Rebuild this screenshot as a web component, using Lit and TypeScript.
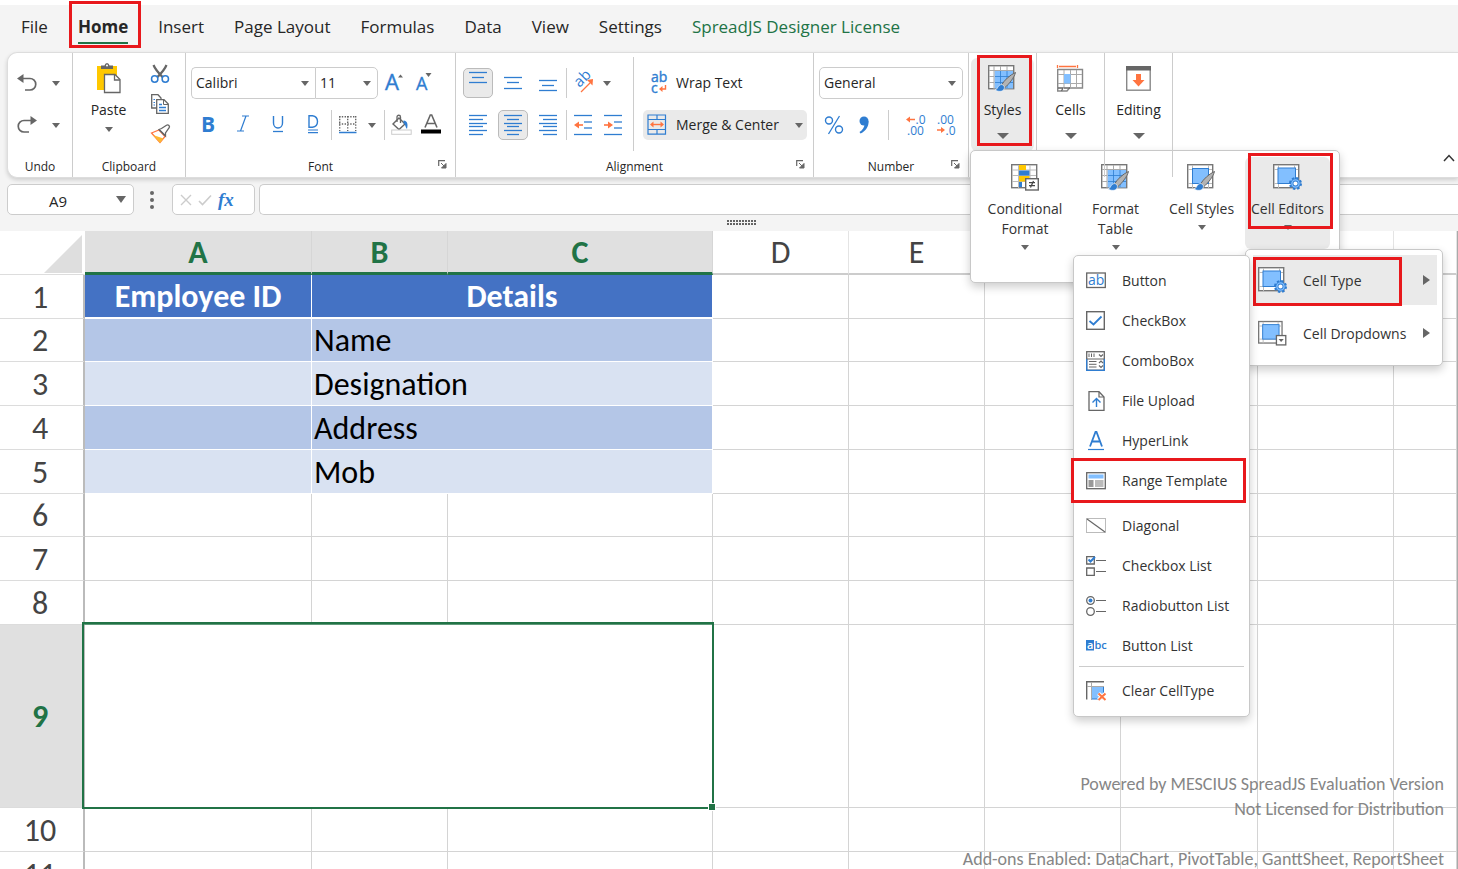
import { LitElement, html, svg, css, nothing, TemplateResult } from "lit";
import { customElement, property } from "lit/decorators.js";
import { classMap } from "lit/directives/class-map.js";
import { styleMap } from "lit/directives/style-map.js";

const BLUE = "#2f7dd1";
const SKY = "#82bfff";
const GRAY = "#666";
const ORANGE = "#ff7440";
const YELLOW = "#ffc800";

const icon = (w: number, h: number, body: unknown) => html`
  <svg width=${w} height=${h} viewBox="0 0 ${w} ${h}" fill="none" aria-hidden="true">${body}</svg>`;

const caret = icon(8, 5, svg`<path d="M0 0H8L4 5Z" fill=${GRAY} />`);
const bigCaret = icon(12, 6, svg`<path d="M0 0H12L6 6Z" fill=${GRAY} />`);
const sideCaret = icon(7, 10, svg`<path d="M0 0L7 5L0 10Z" fill=${GRAY} />`);

/* Horizontal rules: each entry is [x1, x2, y]. */
const bars = (rows: number[][]) =>
  rows.map(([a, b, y]) => svg`<path d="M${a} ${y}H${b}" stroke=${BLUE} stroke-width="1.3" />`);

const gridFrame = svg`
  <rect x="0.7" y="0.7" width="25" height="23" fill="#fff" stroke="#777" stroke-width="1.4" />
  <path d="M5.5 1V24M21.5 1V24M1 5.5H25M1 19.5H25" stroke="#bbb" />`;

const brush = svg`
  <path d="M27.5 7.5C22 10 16.500 15 13.500 20L16.500 23C21 19 26 13 27.500 7.500Z" fill="#b3b3b3" stroke="#666" stroke-width="1" />
  <path d="M7 25C10 24.500 9.500 20 13 19.500C16 19.500 17.500 22.500 15.500 25C13.500 27 9.500 26.500 7 25Z" fill=${BLUE} stroke="#fff" stroke-width=".6" />`;

const gear = svg`
  <g transform="translate(22.500 19.500)">
    <circle r="5" stroke=${BLUE} stroke-width="3" stroke-dasharray="2.200 1.727" />
    <circle r="3.600" fill="#fff" stroke=${BLUE} stroke-width="3" />
    <circle r="3.600" stroke=${SKY} stroke-width="1.400" />
  </g>`;

const I = {
  undo: icon(20, 18, svg`<path d="M0 4.500L6.500 0V9Z" fill=${GRAY} /><path d="M5 4.500H13A5.700 5.700 0 0 1 13 16H8" stroke=${GRAY} stroke-width="1.700" />`),
  redo: icon(20, 18, svg`<path d="M20 4.500L13.500 0V9Z" fill=${GRAY} /><path d="M15 4.500H7A5.700 5.700 0 0 0 7 16H12" stroke=${GRAY} stroke-width="1.700" />`),
  paste: icon(25, 30, svg`
    <path d="M1 3H21V27H1Z" fill=${YELLOW} />
    <path d="M5 6V2.500H8.500Q9 0 11 0T13.500 2.500H17V6Z" fill=${GRAY} /><circle cx="11" cy="2.500" r="1" fill="#fff" />
    <path d="M8.500 11.500H19L24 16.500V29.500H8.500Z" fill="#fff" stroke=${GRAY} stroke-width="1.300" />
    <path d="M18.500 11.500V17H24" stroke=${GRAY} stroke-width="1.300" />`),
  cut: icon(20, 20, svg`
    <path d="M3.500 1C5 5 9 9.500 13 13.500M16.500 1C15 5 11 9.500 7 13.500" stroke=${GRAY} stroke-width="2.200" />
    <circle cx="4.700" cy="15" r="3.200" stroke=${BLUE} stroke-width="1.500" /><circle cx="15.300" cy="15" r="3.200" stroke=${BLUE} stroke-width="1.500" />`),
  copy: icon(20, 20, svg`
    <path d="M1.700.7H8L11 4V14H1.700Z" fill="#fff" stroke=${GRAY} stroke-width="1.300" />
    <path d="M3.500 5.500H5M3.500 8.500H5M3.500 11H5" stroke=${BLUE} />
    <path d="M6.700 5.700H14L18.300 10V19.300H6.700Z" fill="#fff" stroke=${GRAY} stroke-width="1.300" />
    <path d="M13.500 6V10.500H18" stroke=${GRAY} /><path d="M9 10.500H12M9 13.500H16M9 16.500H16" stroke=${BLUE} stroke-width="1.300" />`),
  painter: icon(21, 20, svg`
    <path d="M1.500 9L9 6L15 12.500L10 18.500Z" fill="#fff" stroke=${ORANGE} stroke-width="1.300" />
    <path d="M3 11L13.500 14.500L10 19Z" fill="#fdb833" />
    <path d="M9 5.500L11.500 4.500L16.500 1.200A1.900 1.900 0 0 1 19 4L15.500 9V12Z" fill="#fff" stroke=${GRAY} stroke-width="1.300" />
    <path d="M9 5.500L15.500 12" stroke=${GRAY} stroke-width="1.300" />`),
  grow: icon(20, 20, svg`<text class="glyph" x="0" y="17" font-size="22" fill=${BLUE} stroke=${BLUE} stroke-width=".4">A</text><path d="M13 4.500L15.500 1.500L18 4.500Z" fill=${GRAY} />`),
  shrink: icon(20, 20, svg`<text class="glyph" x="1" y="17" font-size="18" fill=${BLUE} stroke=${BLUE} stroke-width=".3">A</text><path d="M10.500 0H16.500L13.500 4Z" fill=${GRAY} />`),
  bold: icon(20, 20, svg`<text class="glyph" x="3" y="17" font-size="21" font-weight="700" fill=${BLUE}>B</text>`),
  italic: icon(20, 20, svg`<path d="M9 1H16M4 16H11M13 1L7.500 16" stroke=${BLUE} stroke-width="1.200" />`),
  underline: icon(20, 20, svg`<path d="M5.500 1V8A4.500 5 0 0 0 14.500 8V1" stroke=${BLUE} stroke-width="1.400" /><path d="M5 16.500H15" stroke=${BLUE} stroke-width="1.300" />`),
  dbl: icon(20, 20, svg`<path d="M6 .7H9.500Q14.500 1.500 14.500 6.500T9.500 12.300H6Z" stroke=${BLUE} stroke-width="1.400" /><path d="M5 15H15M5 17.700H15" stroke=${BLUE} stroke-width="1.200" />`),
  borders: icon(18, 18, svg`
    <path d="M.7 0V15M8.700 0V15M16.700 0V15" stroke=${GRAY} stroke-width="1.400" stroke-dasharray="1.400 1.400" />
    <path d="M0 .7H17M0 8H17" stroke=${GRAY} stroke-width="1.400" stroke-dasharray="1.400 1.400" /><path d="M0 16.500H17.500" stroke=${BLUE} stroke-width="1.500" />`),
  fill: icon(21, 20, svg`
    <path d="M8 3L14 9L8 14.500L2 9Z" stroke=${GRAY} stroke-width="1.400" /><path d="M6 7V2A1.700 1.700 0 0 1 9.500 2V8" stroke=${GRAY} stroke-width="1.300" />
    <path d="M12.500 5.500C17 6 17 10 16 14C14 12 15 10 12.500 8Z" fill=${BLUE} /><rect x=".7" y="15" width="19.500" height="4.300" fill="#fff" stroke="#ccc" />`),
  color: icon(20, 20, svg`<path d="M4 12.500L9.300 0H10.700L16 12.500M6 8.500H14" stroke=${GRAY} stroke-width="1.600" /><rect x="0" y="14.500" width="20" height="4" fill="#000" />`),
  top: icon(20, 20, bars([[1, 19, -0.5], [4, 16, 4.5], [1, 19, 9.5]])),
  middle: icon(20, 20, bars([[1, 19, 4.5], [4, 16, 9.5], [1, 19, 15.5]])),
  bottom: icon(20, 20, bars([[1, 19, 7.5], [4, 16, 12.5], [1, 19, 17.5]])),
  left: icon(20, 20, bars([[1, 19, 0.5], [1, 15, 4.500], [1, 19, 8.500], [1, 15, 11.500], [1, 19, 15.500], [1, 15, 19.500]])),
  center: icon(20, 20, bars([[1, 19, 0.5], [4, 16, 4.500], [1, 19, 8.500], [4, 16, 11.500], [1, 19, 15.500], [4, 16, 19.500]])),
  right: icon(20, 20, bars([[1, 19, 0.5], [5, 19, 4.500], [1, 19, 8.500], [5, 19, 11.500], [1, 19, 15.500], [5, 19, 19.500]])),
  outdent: icon(20, 20, svg`${bars([[1, 19, 0.5], [11, 19, 7], [11, 19, 13], [1, 19, 19.5]])}<path d="M3 10H10" stroke=${ORANGE} stroke-width="1.600" /><path d="M1 10L6 6.500V13.500Z" fill=${ORANGE} />`),
  indent: icon(20, 20, svg`${bars([[1, 19, 0.5], [11, 19, 7], [11, 19, 13], [1, 19, 19.5]])}<path d="M1 10H7" stroke=${ORANGE} stroke-width="1.600" /><path d="M10 10L5 6.500V13.500Z" fill=${ORANGE} />`),
  orient: icon(20, 20, svg`
    <text class="glyph" transform="translate(6.500 15) rotate(-45)" font-size="15" fill=${BLUE}>ab</text>
    <path d="M8 19L17 10" stroke=${ORANGE} stroke-width="1.300" /><path d="M14 7L20 6L19.500 12.500Z" fill=${ORANGE} />`),
  wrap: icon(20, 22, svg`
    <text class="glyph" x="4" y="10" font-size="14" fill=${BLUE} stroke=${BLUE} stroke-width=".4">ab</text><text class="glyph" x="4" y="20.500" font-size="14" fill=${BLUE} stroke=${BLUE} stroke-width=".4">c</text>
    <path d="M18.500 13V17H14" stroke=${ORANGE} stroke-width="1.400" /><path d="M12 17L15.500 14V20Z" fill=${ORANGE} />`),
  merge: icon(20, 20, svg`
    <path d="M1 0H18.500V19.200H1ZM1 4.500H18.500M1 14.500H18.500M10 0V4.500M10 14.500V19" stroke=${BLUE} stroke-width="1.200" />
    <path d="M5 9.500H15" stroke=${ORANGE} stroke-width="1.400" /><path d="M3 9.500L6.500 6.500V12.500ZM17 9.500L13.500 6.500V12.500Z" fill=${ORANGE} />`),
  percent: icon(20, 20, svg`
    <circle cx="5" cy="5.500" r="3.500" stroke=${BLUE} stroke-width="1.400" /><circle cx="15" cy="14.500" r="3.500" stroke=${BLUE} stroke-width="1.400" />
    <path d="M15.500 1L4.500 19" stroke=${BLUE} stroke-width="1.300" />`),
  comma: icon(20, 20, svg`<circle cx="10" cy="6" r="4.500" fill=${BLUE} /><path d="M14.500 6C15 12 11 16.500 6.500 18.500L5.500 17C8.500 15 10.500 12.500 10.500 9Z" fill=${BLUE} />`),
  lessDec: icon(20, 22, svg`
    <text class="glyph" x="9.500" y="10" font-size="12" fill=${BLUE}>.0</text><text class="glyph" x="1" y="20.500" font-size="12" fill=${BLUE}>.00</text>
    <path d="M3 5.500H9" stroke=${ORANGE} stroke-width="1.500" /><path d="M0 5.500L4 2.500V8.500Z" fill=${ORANGE} />`),
  moreDec: icon(20, 22, svg`
    <text class="glyph" x="1" y="10" font-size="12" fill=${BLUE}>.00</text><text class="glyph" x="9.500" y="20.500" font-size="12" fill=${BLUE}>.0</text>
    <path d="M1 16H6" stroke=${ORANGE} stroke-width="1.500" /><path d="M9 16L5 13V19Z" fill=${ORANGE} />`),
  launcher: icon(9, 9, svg`<path d="M.7 6V.7H7" stroke=${GRAY} stroke-width="1.200" /><path d="M3 3L7 7M8 3.500V8H3.500Z" fill=${GRAY} stroke=${GRAY} />`),
  styles: icon(29, 27, svg`
    <rect x=".7" y=".7" width="25" height="23" fill="#fff" stroke="#777" stroke-width="1.400" /><rect x="6.500" y="5.500" width="18.500" height="18" fill=${SKY} />
    <path d="M6 1V24M1 5.500H25" stroke="#aaa" /><path d="M1 11.500H6M1 17.500H6M12.500 1V5.500M19 1V5.500" stroke="#aaa" />
    <path d="M12.500 6V23M19 6V23M7 11.500H25M7 17.500H25" stroke=${BLUE} stroke-width=".8" />${brush}`),
  cellStyles: icon(29, 27, svg`${gridFrame}<rect x="5.500" y="4.500" width="16" height="15" fill=${SKY} stroke=${BLUE} />${brush}`),
  cellEditors: icon(29, 27, svg`${gridFrame}<rect x="5" y="4" width="17.500" height="15.500" fill=${SKY} stroke=${BLUE} />${gear}`),
  cellDrop: icon(31, 27, svg`${gridFrame}<rect x="5" y="4" width="17.500" height="15.500" fill=${SKY} stroke=${BLUE} />
    <rect x="19.700" y="15.700" width="10" height="10" fill="#fff" stroke=${GRAY} stroke-width="1.400" /><path d="M22 19.500H27.500L24.700 22.500Z" fill=${GRAY} />`),
  cells: icon(29, 27, svg`
    <path d="M1.500 0V3M21.500 0V3M3 1.500H20" stroke=${ORANGE} stroke-width="1.300" />
    <path d="M1.700 4.500H26.500V23H13.500L11 26H1.700Z" fill="#fff" stroke="#888" stroke-width="1.400" />
    <path d="M8 5V22M14.500 5V22M20.500 5V22M2 9.500H26M2 18.500H26" stroke="#aaa" /><rect x="8" y="9" width="6.500" height="9.500" fill=${SKY} />
    <path d="M2 23H7L5.500 26M8 23H14" stroke=${GRAY} stroke-width="1.300" />`),
  editing: icon(25, 25, svg`
    <rect x=".7" y=".7" width="23.500" height="23.500" fill="#fff" stroke="#888" stroke-width="1.400" /><rect width="25" height="4.500" fill=${GRAY} />
    <path d="M10 8H15V14H18.500L12.500 20.500L6.500 14H10Z" fill=${ORANGE} />`),
  conditional: icon(29, 27, svg`
    <rect x=".7" y=".7" width="25" height="23" fill="#fff" stroke="#777" stroke-width="1.400" />
    <path d="M7.500 1V24M19 1V24M1 6H25M1 11.500H25M1 17.500H25" stroke="#bbb" />
    <rect x="8" y="1" width="7" height="5" fill=${YELLOW} /><rect x="8" y="6.500" width="10.500" height="5" fill=${BLUE} />
    <rect x="8" y="12" width="10.500" height="5.500" fill=${YELLOW} /><rect x="8" y="18" width="3" height="5" fill=${BLUE} />
    <rect x="14.700" y="14.700" width="12.600" height="11.300" fill="#fff" stroke=${GRAY} stroke-width="1.400" />
    <path d="M18 18.700H24M18 21.700H24M22.500 17L19.500 23.500" stroke="#444" stroke-width="1.200" />`),
  button: icon(20, 20, svg`<rect x=".7" y="2" width="18.600" height="14.500" fill="#fff" stroke=${GRAY} stroke-width="1.300" /><text class="glyph" x="2" y="14" font-size="14" fill=${BLUE}>ab</text>`),
  checkbox: icon(20, 20, svg`<rect x=".7" y=".7" width="17.600" height="17.600" fill="#fff" stroke=${GRAY} stroke-width="1.400" /><path d="M3.500 10L7.500 13.500L15.500 5.500" stroke=${BLUE} stroke-width="1.800" />`),
  combo: icon(20, 20, svg`
    <rect x=".7" y=".7" width="17.600" height="18.500" fill="#fff" stroke=${GRAY} stroke-width="1.300" /><path d="M.7 8V19.300H18.300V8" stroke=${BLUE} stroke-width="1.300" />
    <path d="M3 2.500V6M5.500 2.500V6M8 2.500V6M3 10.500H10.500M3 13.300H10.500M3 16H10.500M1 8H18" stroke=${GRAY} />
    <path d="M13 3.500L15 5.500L17 3.500M13 12L15 10L17 12M13 14.500L15 16.500L17 14.500" stroke=${GRAY} stroke-width="1.200" />`),
  upload: icon(20, 20, svg`
    <path d="M3 .7H13L18 6V19.300H3Z" fill="#fff" stroke=${GRAY} stroke-width="1.300" /><path d="M13 1V6H18" stroke=${GRAY} stroke-width="1.200" />
    <path d="M10.500 16V8M6.500 11.500L10.500 7.500L14.500 11.500" stroke=${BLUE} stroke-width="1.400" />`),
  link: icon(20, 20, svg`<path d="M4 15.500L9.500 1H10.500L16 15.500M6 10.500H14" stroke=${BLUE} stroke-width="1.800" /><path d="M2 18.500H18" stroke=${BLUE} stroke-width="1.200" />`),
  template: icon(20, 20, svg`
    <rect x=".7" y="1.700" width="18.600" height="16" fill="#fff" stroke=${GRAY} stroke-width="1.300" /><rect x="2.500" y="3.500" width="15" height="4" fill=${SKY} />
    <rect x="2.500" y="9" width="5" height="7" fill="#999" /><rect x="9" y="9" width="8.500" height="7" fill="#bbb" />`),
  diagonal: icon(20, 20, svg`<rect x=".5" y="2.500" width="19" height="14" fill="#fff" stroke="#bbb" /><path d="M1 3L19 16" stroke=${GRAY} stroke-width="1.200" />`),
  checkList: icon(20, 20, svg`
    <path d="M.7.700H8.300V8H.7ZM.7 12H8.300V19.300H.7Z" stroke=${GRAY} stroke-width="1.300" /><path d="M10 4.500H20M10 15.500H20" stroke=${GRAY} stroke-width="1.200" />
    <path d="M2.500 3.500L4.500 5.500L9 1" stroke=${BLUE} stroke-width="2" />`),
  radioList: icon(20, 20, svg`
    <circle cx="4.500" cy="4.500" r="3.800" stroke=${GRAY} stroke-width="1.300" /><circle cx="4.500" cy="4.500" r="2" fill=${BLUE} />
    <circle cx="4.500" cy="15.500" r="3.800" stroke=${GRAY} stroke-width="1.300" /><path d="M10 4.500H20M10 15.500H20" stroke=${GRAY} stroke-width="1.200" />`),
  buttonList: icon(20, 20, svg`
    <rect x="0" y="4" width="8" height="10.500" fill=${BLUE} /><text class="glyph" x="1" y="12.500" font-size="11" font-weight="600" fill="#fff">a</text>
    <text class="glyph" x="8.500" y="12.500" font-size="11" font-weight="600" fill=${BLUE}>bc</text>`),
  clear: icon(20, 20, svg`
    <rect x="5.500" y="5.500" width="12" height="12.500" fill=${SKY} stroke=${BLUE} /><path d="M.7 18.500V.7H18" stroke=${GRAY} stroke-width="1.400" />
    <path d="M5.500 1V19M1 5.500H18" stroke="#aaa" /><path d="M12.500 12.500L19.500 19M19.500 12.500L12.500 19" stroke="#fff" stroke-width="4" />
    <path d="M12.500 12.500L19.500 19M19.500 12.500L12.500 19" stroke=${ORANGE} stroke-width="2" />`),
  collapse: icon(12, 8, svg`<path d="M1 7L6 1.500L11 7" stroke="#333" stroke-width="1.500" />`),
  dots: icon(4, 18, svg`<circle cx="2" cy="2" r="2" fill=${GRAY} /><circle cx="2" cy="9" r="2" fill=${GRAY} /><circle cx="2" cy="16" r="2" fill=${GRAY} />`),
  cancel: icon(12, 12, svg`<path d="M1 1L11 11M11 1L1 11" stroke="#ccc" stroke-width="1.400" />`),
  accept: icon(14, 12, svg`<path d="M1 7L4.500 10.500L13 1.500" stroke="#ccc" stroke-width="1.600" />`),
};

const uiFont = css`
  * { box-sizing: border-box; }
  button, input, select { font: inherit; color: inherit; margin: 0; }
  button { border: 0; padding: 0; background: none; }
  svg { display: block; flex: none; overflow: visible; }
  .glyph { font-family: "Open Sans", sans-serif; }
  .mark { position: absolute; border: 3px solid #e8181c; pointer-events: none; z-index: 3; }
`;

interface MenuEntry { label: string; glyph: TemplateResult; marked?: boolean; ruleAfter?: string; }

const CELL_TYPES: MenuEntry[] = [
  { label: "Button", glyph: I.button },
  { label: "CheckBox", glyph: I.checkbox },
  { label: "ComboBox", glyph: I.combo },
  { label: "File Upload", glyph: I.upload },
  { label: "HyperLink", glyph: I.link },
  { label: "Range Template", glyph: I.template, marked: true, ruleAfter: "rule" },
  { label: "Diagonal", glyph: I.diagonal },
  { label: "Checkbox List", glyph: I.checkList },
  { label: "Radiobutton List", glyph: I.radioList },
  { label: "Button List", glyph: I.buttonList, ruleAfter: "rule" },
  { label: "Clear CellType", glyph: I.clear },
];

@customElement("styles-menu")
class StylesMenu extends LitElement {
  static styles = [uiFont, css`
    :host { display: block; font-size: 14px; line-height: 20px; color: #333; }
    .panel { background: #fff; border: 1px solid #c8c8c8; border-radius: 5px; box-shadow: 0 4px 10px rgba(0, 0, 0, .2); }
    .gallery { position: relative; display: flex; gap: 1px; width: 370px; height: 133px; padding: 6px 7px; align-items: flex-start; }
    .tile { position: relative; display: flex; flex-direction: column; align-items: center; justify-content: flex-start; height: 92px; padding-top: 7px; border-radius: 6px; text-align: center; flex: none; width: 85px; }
    .tile.wide { width: 94px; }
    .tile svg:last-of-type { margin-top: 6px; }
    .tile .text { padding-top: 8px; white-space: nowrap; }
    .tile .text.wrap { white-space: normal; }
    .tile.active { background: #eaeaea; }
    .editors { position: absolute; top: 99px; left: 275px; width: 198px; padding: 5px 5px 5px 7px; display: flex; flex-direction: column; gap: 3px; height: 117px; z-index: 1; }
    .row { position: relative; display: flex; align-items: center; gap: 16px; height: 50px; padding: 0 7px 0 5px; text-align: left; width: 100%; }
    .row.active { background: #eaeaea; }
    .row .text { flex: 1; white-space: nowrap; padding-top: 1px; }
    .row svg:first-child { width: 29px; }
    .types { position: absolute; top: 105px; left: 103px; width: 177px; padding: 5px; z-index: 2; }
    .item { position: relative; display: flex; align-items: center; gap: 16px; width: 100%; height: 40px; padding: 0 7px; text-align: left; white-space: nowrap; }
    .rule { border: 0; border-top: 1px solid #ccc; margin: 0 0 4px; }
    .on-tile { top: -4px; left: 3px; width: 85px; height: 76px; }
    .on-row { top: 2px; left: 0; width: 149px; height: 49px; }
    .on-item { top: -3px; left: -8px; width: 175px; height: 45px; }
  `];

  render() {
    return html`
      <div class="panel gallery" role="menu" aria-label="Styles">
        <button class="tile wide">${I.conditional}<span class="text wrap">Conditional Format</span>${caret}</button>
        <button class="tile">${I.styles}<span class="text">Format<br />Table</span>${caret}</button>
        <button class="tile">${I.cellStyles}<span class="text">Cell Styles</span>${caret}</button>
        <button class="tile active">${I.cellEditors}<span class="text">Cell Editors</span>${caret}<span class="mark on-tile"></span></button>
      </div>
      <div class="panel editors" role="menu" aria-label="Cell Editors">
        <button class="row active">${I.cellEditors}<span class="text">Cell Type</span>${sideCaret}<span class="mark on-row"></span></button>
        <button class="row">${I.cellDrop}<span class="text">Cell Dropdowns</span>${sideCaret}</button>
      </div>
      <div class="panel types" role="menu" aria-label="Cell Type">
        ${CELL_TYPES.map((e) => html`
          <button class="item">${e.glyph}<span>${e.label}</span>${e.marked ? html`<span class="mark on-item"></span>` : nothing}</button>
          ${e.ruleAfter ? html`<hr class=${e.ruleAfter} />` : nothing}`)}
      </div>`;
  }
}

@customElement("ribbon-bar")
class RibbonBar extends LitElement {
  static styles = [uiFont, css`
    :host { display: flex; position: relative; z-index: 5; margin-left: 7px; height: 126px; background: #fff; border: 1px solid #ddd; border-right: 0; border-radius: 10px 0 0 10px; box-shadow: 0 2px 4px rgba(0, 0, 0, .16); font-size: 14px; line-height: 20px; color: #262626; }
    .group { position: relative; display: flex; flex-direction: column; flex: none; border-right: 1px solid #ccc; padding: 15px 5px 0; }
    .undo { width: 65px; padding: 15px 4px 0; } .clip { width: 113px; } .font { width: 270px; } .align { width: 358px; } .num { width: 155px; }
    .undo .line { gap: 5px; }
    .drop { width: 68px; padding: 5px 2px 0; }
    .body { flex: 1; display: flex; flex-direction: column; gap: 12px; }
    .line { display: flex; align-items: center; height: 30px; }
    .caption { display: flex; justify-content: center; align-items: center; height: 20px; font-size: 12px; }
    .launcher { position: absolute; right: 8px; bottom: 8px; }
    .btn { display: flex; flex: none; align-items: center; justify-content: center; width: 30px; height: 30px; border: 1px solid transparent; border-radius: 5px; }
    .btn.on { background: #eaeaea; border-color: #bbb; }
    .btn.slim { width: 18px; }
    .gap { gap: 5px; }
    .sep { flex: none; width: 1px; height: 30px; background: #ccc; margin: 0 1px 0 3px; }
    .sep.far { margin: 0 12px 0 9px; }
    .inset { padding-left: 2px; }
    .clipbody { flex: 1; display: flex; gap: 11px; }
    .paste { display: flex; flex-direction: column; align-items: center; gap: 7px; width: 61px; margin-top: -5px; height: 76px; }
    .stack { display: flex; flex-direction: column; gap: 10px; margin-top: -4px; }
    .pick { position: relative; display: flex; align-items: center; height: 32px; border: 1px solid #ccc; border-radius: 5px; background: #fff; }
    .pick select { appearance: none; border: 0; background: none; width: 100%; height: 100%; padding: 0 4px; outline: 0; }
    .pick svg { position: absolute; right: 6px; pointer-events: none; }
    .family { width: 124px; border-radius: 5px 0 0 5px; border-right: 0; }
    .size { width: 63px; border-radius: 0 5px 5px 0; margin-right: 2px; }
    .format { width: 145px; }
    .alignbody { flex: 1; display: flex; padding-left: 2px; }
    .alignbody .body { flex: none; }
    .tall { flex: none; width: 1px; height: 94px; background: #ccc; margin: -11px 9px 0 5px; }
    .wide { display: flex; align-items: center; gap: 9px; height: 30px; width: 164px; padding: 0 4px; border-radius: 5px; white-space: nowrap; text-align: left; }
    .wide span { flex: 1; }
    .wide.on { background: #eaeaea; }
    .dropbtn { display: flex; flex-direction: column; align-items: center; height: 93px; width: 100%; padding-top: 7px; border-radius: 6px; }
    .dropbtn.on { background: #eaeaea; }
    .dropbtn .text { padding: 8px 0 13px; }
    .dropbtn svg:first-child { height: 27px; }
    .fold { margin-left: auto; align-self: flex-end; padding: 15px 3px; }
    .on-styles { top: 2px; left: 8px; width: 55px; height: 91px; }
    styles-menu { position: absolute; top: 97px; left: 1px; }
  `];

  private btn(name: string, glyph: TemplateResult, cls = "") {
    return html`<button class="btn ${cls}" aria-label=${name} title=${name}>${glyph}</button>`;
  }

  render() {
    return html`
      <section class="group undo">
        <div class="body">
          <div class="line">${this.btn("Undo", I.undo)}${this.btn("Undo history", caret, "slim")}</div>
          <div class="line">${this.btn("Redo", I.redo)}${this.btn("Redo history", caret, "slim")}</div>
        </div>
        <div class="caption">Undo</div>
      </section>
      <section class="group clip">
        <div class="clipbody">
          <button class="paste">${I.paste}<span>Paste</span>${caret}</button>
          <div class="stack">
            <button aria-label="Cut">${I.cut}</button><button aria-label="Copy">${I.copy}</button><button aria-label="Format painter">${I.painter}</button>
          </div>
        </div>
        <div class="caption">Clipboard</div>
      </section>
      <section class="group font">
        <div class="body">
          <div class="line">
            <div class="pick family"><select aria-label="Font family"><option>Calibri</option></select>${caret}</div>
            <div class="pick size"><select aria-label="Font size"><option>11</option></select>${caret}</div>
            ${this.btn("Increase font size", I.grow)}${this.btn("Decrease font size", I.shrink)}
          </div>
          <div class="line inset">
            <div class="line gap">${this.btn("Bold", I.bold)}${this.btn("Italic", I.italic)}${this.btn("Underline", I.underline)}${this.btn("Double underline", I.dbl)}</div>
            <span class="sep"></span>
            ${this.btn("Borders", I.borders)}${this.btn("Border options", caret, "slim")}
            <span class="sep"></span>
            ${this.btn("Fill color", I.fill)}${this.btn("Font color", I.color)}
          </div>
        </div>
        <div class="caption">Font</div>
        <button class="launcher" aria-label="Font settings">${I.launcher}</button>
      </section>
      <section class="group align">
        <div class="alignbody">
          <div class="body">
            <div class="line">
              <div class="line gap">${this.btn("Top align", I.top, "on")}${this.btn("Middle align", I.middle)}${this.btn("Bottom align", I.bottom)}</div>
              <span class="sep"></span>${this.btn("Orientation", I.orient)}${this.btn("Orientation options", caret, "slim")}
            </div>
            <div class="line">
              <div class="line gap">${this.btn("Align left", I.left)}${this.btn("Center", I.center, "on")}${this.btn("Align right", I.right)}</div>
              <span class="sep"></span>${this.btn("Decrease indent", I.outdent)}${this.btn("Increase indent", I.indent)}
            </div>
          </div>
          <span class="tall"></span>
          <div class="body">
            <button class="wide">${I.wrap}<span>Wrap Text</span></button>
            <button class="wide on">${I.merge}<span>Merge &amp; Center</span>${caret}</button>
          </div>
        </div>
        <div class="caption">Alignment</div>
        <button class="launcher" aria-label="Alignment settings">${I.launcher}</button>
      </section>
      <section class="group num">
        <div class="body">
          <div class="line"><div class="pick format"><select aria-label="Number format"><option>General</option></select>${caret}</div></div>
          <div class="line">
            ${this.btn("Percent", I.percent)}${this.btn("Comma style", I.comma)}
            <span class="sep far"></span>
            ${this.btn("Increase decimal", I.lessDec)}${this.btn("Decrease decimal", I.moreDec)}
          </div>
        </div>
        <div class="caption">Number</div>
        <button class="launcher" aria-label="Number settings">${I.launcher}</button>
      </section>
      <section class="group drop">
        <button class="dropbtn on">${I.styles}<span class="text">Styles</span>${bigCaret}</button>
        <span class="mark on-styles"></span>
        <styles-menu></styles-menu>
      </section>
      <section class="group drop"><button class="dropbtn">${I.cells}<span class="text">Cells</span>${bigCaret}</button></section>
      <section class="group drop"><button class="dropbtn">${I.editing}<span class="text">Editing</span>${bigCaret}</button></section>
      <button class="fold" aria-label="Collapse ribbon">${I.collapse}</button>`;
  }
}

interface SheetRow { n: number; h: number; a?: string; b?: string; kind?: string; }

const COLUMNS = [
  { name: "A", w: 227, on: true }, { name: "B", w: 136, on: true }, { name: "C", w: 265, on: true },
  { name: "D", w: 136 }, { name: "E", w: 136 }, { name: "F", w: 136 }, { name: "G", w: 137 }, { name: "H", w: 136 }, { name: "" },
] as { name: string; w?: number; on?: boolean }[];

const ROWS: SheetRow[] = [
  { n: 1, h: 44, a: "Employee ID", b: "Details", kind: "title" },
  { n: 2, h: 43, b: "Name", kind: "dark" },
  { n: 3, h: 44, b: "Designation", kind: "light" },
  { n: 4, h: 44, b: "Address", kind: "dark" },
  { n: 5, h: 44, b: "Mob", kind: "light" },
  { n: 6, h: 43 }, { n: 7, h: 44 }, { n: 8, h: 44 },
  { n: 9, h: 183, kind: "merged" },
  { n: 10, h: 44 }, { n: 11, h: 44 },
];

@customElement("work-sheet")
class WorkSheet extends LitElement {
  @property({ type: Number }) activeRow = 9;

  static styles = [uiFont, css`
    :host { display: block; position: relative; overflow: hidden; background: #fff; font-family: Calibri, Carlito, Lato, sans-serif; font-size: 32px; line-height: 36px; color: #000; border-right: 1px solid #aaa; }
    table { width: 100%; table-layout: fixed; border-collapse: separate; border-spacing: 0; }
    th, td { padding: 2px 0 0; font-weight: 400; border: 0 solid #d4d4d4; border-width: 0 1px 1px 0; white-space: nowrap; }
    .side { width: 85px; }
    thead th { height: 44px; color: #444; border-bottom-width: 2px; border-bottom-color: #ccc; border-right-color: #e4e4e4; }
    thead th.on { background: #e0e0e0; color: #217346; font-weight: 700; border-bottom: 3px solid #217346; border-right-color: #d6d6d6; }
    thead th.corner { border-right-color: #fff; border-bottom: 1px solid #ddd; }
    .corner svg { margin-left: auto; margin-right: 2px; }
    tbody th { color: #444; border-right: 2px solid #bbb; padding-right: 3px; border-bottom-color: #dcdcdc; }
    tbody th.on { background: #e0e0e0; color: #217346; font-weight: 700; }
    .title { background: #4472c4; color: #fff; font-weight: 700; text-align: center; border-right-color: #fff; border-bottom: 2px solid #fff; }
    .dark { background: #b4c6e7; border-color: #fff; padding-left: 2px; }
    .light { background: #d9e2f2; border-color: #fff; padding-left: 2px; }
    .picked { position: relative; }
    .cursor { position: absolute; inset: -3px -2px -2px -3px; border: 2px solid #217346; box-shadow: inset 0 1px 0 #5f9a7a; }
    .handle { position: absolute; right: -4px; bottom: -4px; width: 8px; height: 8px; background: #217346; border: 1px solid #fff; }
    .notice { position: absolute; right: 13px; bottom: 0; display: flex; flex-direction: column; align-items: flex-end; font-size: 18px; line-height: 25px; color: #868686; height: 97px; white-space: nowrap; }
    .addons { padding-top: 25px; }
  `];

  private cells(r: SheetRow) {
    const blank = (k: number) => Array.from({ length: k }, () => html`<td></td>`);
    if (r.kind === "merged") {
      return html`<td class="picked" colspan="3"><div class="cursor"></div><div class="handle"></div></td>${blank(6)}`;
    }
    if (r.kind) {
      return html`<td class=${r.kind}>${r.a ?? nothing}</td><td class=${r.kind} colspan="2">${r.b}</td>${blank(6)}`;
    }
    return blank(9);
  }

  render() {
    return html`
      <table>
        <colgroup>
          <col class="side" />
          ${COLUMNS.map((c) => html`<col style=${styleMap(c.w ? { width: `${c.w}px` } : {})} />`)}
        </colgroup>
        <thead>
          <tr>
            <th class="corner">${icon(38, 38, svg`<path d="M38 0V38H0Z" fill="#dedede" />`)}</th>
            ${COLUMNS.map((c) => html`<th class=${classMap({ on: !!c.on })}>${c.name}</th>`)}
          </tr>
        </thead>
        <tbody>
          ${ROWS.map((r) => html`
            <tr style=${styleMap({ height: `${r.h}px` })}>
              <th class=${classMap({ on: r.n === this.activeRow })}>${r.n}</th>${this.cells(r)}
            </tr>`)}
        </tbody>
      </table>
      <div class="notice">
        <span>Powered by MESCIUS SpreadJS Evaluation Version</span>
        <span>Not Licensed for Distribution</span>
        <span class="addons">Add-ons Enabled: DataChart, PivotTable, GanttSheet, ReportSheet</span>
      </div>`;
  }
}

const TABS = ["File", "Home", "Insert", "Page Layout", "Formulas", "Data", "View", "Settings", "SpreadJS Designer License"];

@customElement("app-root")
class AppRoot extends LitElement {
  static styles = [uiFont, css`
    :host { display: flex; flex-direction: column; box-sizing: border-box; height: 100vh; overflow: hidden; padding-top: 5px; background: linear-gradient(#fff 5px, #f4f4f4 5px); font-family: "Open Sans", "Noto Sans", sans-serif; font-size: 14px; color: #262626; }
    .tabs { display: flex; gap: 30px; height: 47px; flex: none; padding: 0 21px; align-items: flex-start; }
    .tab { position: relative; height: 39px; padding-top: 5px; font-size: 17px; line-height: 24px; white-space: nowrap; display: flex; align-items: center; }
    .tab.on { font-weight: 700; }
    .tab.on::after { content: ""; position: absolute; left: 0; right: 0; bottom: 0; height: 2px; background: #217346; }
    .tab.brand { color: #217346; }
    .on-tab { top: -4px; left: -9px; right: -13px; height: 47px; }
    .formula { display: flex; align-items: center; height: 38px; flex: none; padding: 6px 0 1px 7px; }
    .box { display: flex; align-items: center; height: 31px; background: #fff; border: 1px solid #ccc; border-radius: 5px; }
    .name { width: 127px; padding-right: 7px; }
    .name input { flex: 1; min-width: 0; border: 0; background: none; text-align: center; outline: 0; padding: 2px 8px 0 0; font-size: 15px; }
    .dots { padding: 0 18px 0 16px; }
    .fx { width: 83px; gap: 6px; padding: 0 7px; margin-right: 4px; }
    .fn { font-family: "Liberation Serif", serif; font-style: italic; font-weight: 700; font-size: 19px; line-height: 20px; color: #2f7dd1; }
    .entry { flex: 1; min-width: 0; height: 31px; background: #fff; border: 1px solid #ccc; border-right: 0; border-radius: 5px 0 0 5px; outline: 0; padding: 0 8px; }
    .split { display: flex; justify-content: center; height: 15px; flex: none; padding-top: 4px; padding-left: 26px; }
    work-sheet { flex: 1; min-height: 0; }
  `];

  render() {
    return html`
      <nav class="tabs">
        ${TABS.map((t) => html`
          <button class=${classMap({ tab: true, on: t === "Home", brand: t.startsWith("SpreadJS") })}>
            ${t}${t === "Home" ? html`<span class="mark on-tab"></span>` : nothing}
          </button>`)}
      </nav>
      <ribbon-bar></ribbon-bar>
      <div class="formula">
        <div class="box name"><input aria-label="Name box" value="A9" />${icon(10, 7, svg`<path d="M0 0H10L5 7Z" fill=${GRAY} />`)}</div>
        <div class="dots">${I.dots}</div>
        <div class="box fx">
          <button aria-label="Cancel">${I.cancel}</button><button aria-label="Enter">${I.accept}</button><button class="fn" aria-label="Insert function">fx</button>
        </div>
        <input class="entry" aria-label="Formula" />
      </div>
      <div class="split">${icon(30, 5, svg`<path d="M0 1H30M0 4H30" stroke="#333" stroke-width="1.500" stroke-dasharray="2 1" />`)}</div>
      <work-sheet></work-sheet>`;
  }
}
